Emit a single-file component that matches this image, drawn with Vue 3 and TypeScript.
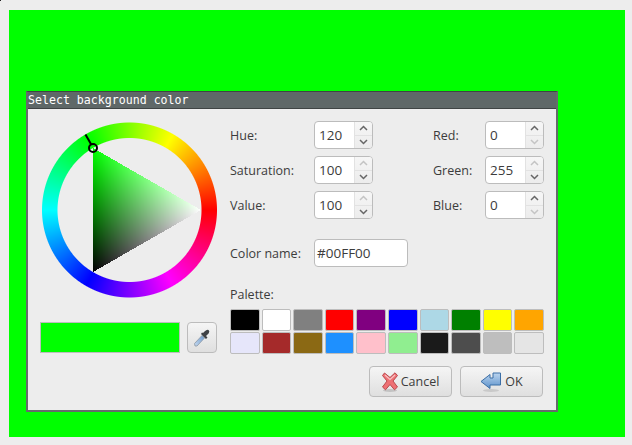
<script setup lang="ts">
import { onMounted, ref } from 'vue';

const wheel = ref<HTMLCanvasElement | null>(null);

const hsvFields = [
  { label: 'Hue:', value: '120', upOff: false, downOff: false },
  { label: 'Saturation:', value: '100', upOff: true, downOff: false },
  { label: 'Value:', value: '100', upOff: true, downOff: false }
];
const rgbFields = [
  { label: 'Red:', value: '0', upOff: false, downOff: true },
  { label: 'Green:', value: '255', upOff: true, downOff: false },
  { label: 'Blue:', value: '0', upOff: false, downOff: true }
];
const groups = [
  { name: 'hsv', fields: hsvFields },
  { name: 'rgb', fields: rgbFields }
];

const palette = [
  '#000000', '#ffffff', '#808080', '#ff0000', '#800080', '#0000ff', '#add8e6', '#008000', '#ffff00', '#ffa500',
  '#e6e6fa', '#a52a2a', '#8b6914', '#1e90ff', '#ffc0cb', '#90ee90', '#1a1a1a', '#4d4d4d', '#bebebe', '#e5e5e5'
];

const hueColor = (deg: number): [number, number, number] => {
  const h = ((deg % 360) + 360) % 360 / 60;
  const x = 1 - Math.abs((h % 2) - 1);
  const table: [number, number, number][] = [[1, x, 0], [x, 1, 0], [0, 1, x], [0, x, 1], [x, 0, 1], [1, 0, x]];
  return table[Math.floor(h) % 6];
};

onMounted(() => {
  const canvas = wheel.value;
  const ctx = canvas?.getContext('2d');
  if (!canvas || !ctx) return;
  const size = canvas.width;
  const img = ctx.createImageData(size, size);
  const cx = 87.5;
  const cy = 88;
  const outer = 87.5;
  const inner = 72;
  // triangle corners: hue on top, white to the right, black at the bottom
  const ax = 51, ay = 26;
  const bx = 159, by = 88;
  const kx = 51, ky = 150;
  const det = (by - ky) * (ax - kx) + (kx - bx) * (ay - ky);

  for (let y = 0; y < size; y++) {
    for (let x = 0; x < size; x++) {
      const i = (y * size + x) * 4;
      const dx = x + 0.5 - cx;
      const dy = y + 0.5 - cy;
      const r = Math.hypot(dx, dy);
      const cover = Math.min(Math.max(outer - r + 0.5, 0), 1) * Math.min(Math.max(r - inner + 0.5, 0), 1);
      if (cover > 0) {
        const [cr, cg, cb] = hueColor((Math.atan2(-dy, dx) * 180) / Math.PI);
        img.data[i] = cr * 255;
        img.data[i + 1] = cg * 255;
        img.data[i + 2] = cb * 255;
        img.data[i + 3] = cover * 255;
        continue;
      }
      const px = x + 0.5;
      const py = y + 0.5;
      const a = ((by - ky) * (px - kx) + (kx - bx) * (py - ky)) / det;
      const b = ((ky - ay) * (px - kx) + (ax - kx) * (py - ky)) / det;
      const c = 1 - a - b;
      if (a >= 0 && b >= 0 && c >= 0) {
        img.data[i] = b * 255;
        img.data[i + 1] = (a + b) * 255;
        img.data[i + 2] = b * 255;
        img.data[i + 3] = 255;
      }
    }
  }
  ctx.putImageData(img, 0, 0);

  // hue cursor
  ctx.strokeStyle = '#000';
  ctx.lineWidth = 2;
  ctx.beginPath();
  ctx.moveTo(43.5, 12.5);
  ctx.lineTo(49.5, 23);
  ctx.stroke();
  ctx.beginPath();
  ctx.arc(51, 26, 4, 0, Math.PI * 2);
  ctx.stroke();
});
</script>

<template>
  <div class="screen">
    <span class="corner"></span>
    <div class="backdrop">
      <div class="dialog">
        <div class="titlebar">Select background color</div>
        <div class="body">
          <div class="left">
            <canvas ref="wheel" class="wheel" width="176" height="176"></canvas>
            <div class="current">
              <div class="preview"></div>
              <button class="btn picker" type="button">
                <svg width="20" height="20" viewBox="0 0 20 20">
                  <defs>
                    <linearGradient id="glass" x1="0" y1="1" x2="1" y2="0">
                      <stop offset="0" stop-color="#c5d8ee" />
                      <stop offset="1" stop-color="#6d9bce" />
                    </linearGradient>
                  </defs>
                  <path d="M3 18 L2.5 15.5 L10 7.5 L12.5 10 L5 18 Z" fill="url(#glass)" stroke="#8a97a4" stroke-width="0.8" />
                  <path d="M9 6 L14 11 L15.5 9.5 L14 8 L16.8 5.2 Q18 3 16.5 2 Q15 1 12.8 3.2 L11 5 L10 4.5 Z" fill="#3f4245" />
                </svg>
              </button>
            </div>
          </div>
          <div class="right">
            <div class="fields">
              <div v-for="g in groups" :key="g.name" class="group" :class="g.name">
                <template v-for="f in g.fields" :key="f.label">
                  <label class="field-label">{{ f.label }}</label>
                  <div class="spin">
                    <span class="spin-value">{{ f.value }}</span>
                    <span class="spin-arrows">
                      <span class="arrow" :class="{ off: f.upOff }">
                        <svg width="9" height="6" viewBox="0 0 9 6"><path d="M1 5 L4.5 1.5 L8 5" /></svg>
                      </span>
                      <span class="arrow" :class="{ off: f.downOff }">
                        <svg width="9" height="6" viewBox="0 0 9 6"><path d="M1 1 L4.5 4.5 L8 1" /></svg>
                      </span>
                    </span>
                  </div>
                </template>
              </div>
            </div>
            <div class="name-row">
              <label class="field-label">Color name:</label>
              <div class="name-entry">#00FF00</div>
            </div>
            <div class="palette-label">Palette:</div>
            <div class="palette">
              <span v-for="(c, i) in palette" :key="i" class="swatch" :style="{ background: c }"></span>
            </div>
            <div class="actions">
              <button class="btn action" type="button">
                <svg width="16" height="20" viewBox="0 0 16 20">
                  <ellipse cx="8" cy="18.5" rx="7" ry="1.5" fill="#c2c2c2" />
                  <path d="M2.5 1 L8 5.5 L13 .8 L15.5 3.5 L11 9 L15.5 15 L12.5 17.8 L8 12.5 L3.5 17.8 L.5 15 L5 9 L.5 3.5 Z" fill="#ee7074" stroke="#b9484d" stroke-width="1" stroke-linejoin="round" />
                  <path d="M3 3 L8 7.5 L13 3" fill="none" stroke="#f8c2c3" stroke-width="1.2" />
                </svg>
                <span>Cancel</span>
              </button>
              <button class="btn action" type="button">
                <svg width="22" height="20" viewBox="0 0 22 20">
                  <defs>
                    <linearGradient id="okArrow" x1="0" y1="0" x2="0" y2="1">
                      <stop offset="0" stop-color="#bcd5ef" />
                      <stop offset="1" stop-color="#5d92cb" />
                    </linearGradient>
                  </defs>
                  <ellipse cx="11" cy="18.5" rx="8" ry="1.5" fill="#c9c9c9" />
                  <path d="M1 9.5 L10 2.5 L10 6 L13 6 L13 1 L20.5 1 L20.5 13 L10 13 L10 16.5 Z" fill="url(#okArrow)" stroke="#3b6ea6" stroke-width="1" stroke-linejoin="round" />
                </svg>
                <span>OK</span>
              </button>
            </div>
          </div>
        </div>
      </div>
    </div>
  </div>
</template>

<style>
html, body {
  margin: 0;
  background: #ededed;
}
</style>

<style scoped>
.screen {
  position: relative;
  width: 632px;
  height: 445px;
  box-sizing: border-box;
  padding: 10px 7px 8px 9px;
  background: #ededed;
  overflow: hidden;
  font-family: "Open Sans", "Noto Sans", sans-serif;
  font-size: 12.5px;
  color: #3c3c3c;
}

.corner {
  position: absolute;
  left: 0;
  top: 0;
  width: 1px;
  height: 1px;
  background: #222;
}

.backdrop {
  height: 100%;
  box-sizing: border-box;
  padding: 81px 0 0 17px;
  background: #00ff00;
}

.dialog {
  width: 532px;
  height: 321px;
  box-sizing: border-box;
  border: 2px solid #666b6b;
  border-top: 1px solid #3f4444;
  background: #ededed;
}

.titlebar {
  height: 16px;
  line-height: 16px;
  background: #5f6868;
  border-bottom: 1px solid #3f4444;
  color: #fff;
  font-family: "DejaVu Sans Mono", monospace;
  font-size: 11.6px;
  white-space: nowrap;
}

.body {
  display: flex;
  gap: 13px;
  padding: 12px 12px 0;
}

.left {
  width: 177px;
}

.wheel {
  display: block;
  margin: 1px 0 0 2px;
}

.current {
  display: flex;
  gap: 7px;
  margin-top: 24px;
}

.preview {
  width: 140px;
  height: 31px;
  box-sizing: border-box;
  border: 1px solid #bdbdbd;
  background: #00ff00;
}

.right {
  width: 314px;
}

.fields {
  display: flex;
  justify-content: space-between;
}

.group {
  display: grid;
  grid-auto-rows: 28px;
  row-gap: 7px;
}

.group.hsv {
  grid-template-columns: 84px 59px;
}

.group.rgb {
  grid-template-columns: 52px 59px;
}

.field-label {
  display: flex;
  align-items: center;
  white-space: nowrap;
}

.spin {
  display: flex;
  box-sizing: border-box;
  border: 1px solid #bcbcbc;
  border-radius: 4px;
  background: #fff;
  overflow: hidden;
}

.spin-value {
  flex: 1;
  align-self: center;
  padding-left: 4px;
  font-size: 13.5px;
}

.spin-arrows {
  display: flex;
  flex-direction: column;
  width: 17px;
  background: linear-gradient(#f6f6f6, #ececec);
  border-left: 1px solid #e2e2e2;
}

.arrow {
  flex: 1;
  display: flex;
  align-items: center;
  justify-content: center;
}

.arrow + .arrow {
  border-top: 1px solid #e2e2e2;
}

.arrow path {
  fill: none;
  stroke: #666;
  stroke-width: 1.5;
}

.arrow.off path {
  stroke: #c4c4c4;
}

.name-row {
  display: grid;
  grid-template-columns: 84px 94px;
  height: 28px;
  margin-top: 20px;
}

.name-entry {
  display: flex;
  align-items: center;
  box-sizing: border-box;
  padding-left: 2px;
  border: 1px solid #bcbcbc;
  border-radius: 4px;
  background: #fff;
  font-size: 13.5px;
}

.palette-label {
  height: 17px;
  line-height: 17px;
  margin-top: 19px;
}

.palette {
  display: grid;
  grid-template-columns: repeat(10, 1fr);
  grid-auto-rows: 22px;
  gap: 1px 2px;
  margin-top: 6px;
}

.swatch {
  box-sizing: border-box;
  border: 1px solid #bdbdbd;
  border-radius: 2px;
}

.actions {
  display: flex;
  justify-content: flex-end;
  gap: 8px;
  margin-top: 12px;
  padding-right: 1px;
}

.btn {
  display: flex;
  align-items: center;
  justify-content: center;
  padding: 0;
  box-sizing: border-box;
  border: 1px solid #bcbcbc;
  border-radius: 4px;
  background: linear-gradient(#f5f5f5, #dfdfdf);
  font: inherit;
  color: inherit;
}

.picker {
  width: 30px;
  height: 31px;
}

.action {
  gap: 3px;
  width: 83px;
  height: 31px;
}
</style>
